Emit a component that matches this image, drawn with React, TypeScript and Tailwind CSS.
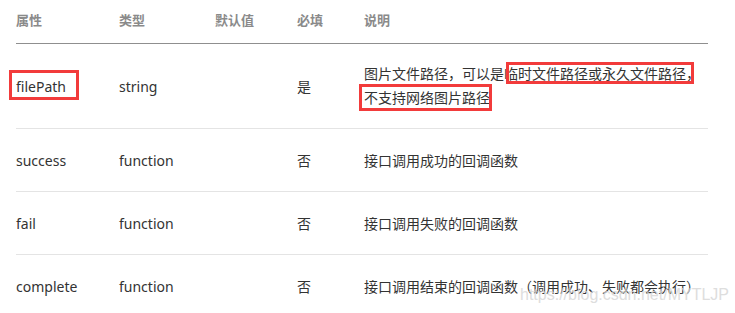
import React from "react";

type Row = {
  name: React.ReactNode;
  type: string;
  def: string;
  req: string;
  desc: React.ReactNode;
  h: string;
};

function Boxed({ children, className }: { children: React.ReactNode; className: string }) {
  return (
    <span className="relative">
      {children}
      <span className={`pointer-events-none absolute border-[3px] border-[#f23b3b] ${className}`} />
    </span>
  );
}

const rows: Row[] = [
  {
    name: <Boxed className="-left-[7px] -right-[13px] -top-[7px] -bottom-[4px]">filePath</Boxed>,
    type: "string",
    def: "",
    req: "是",
    desc: (
      <div className="leading-[24px]">
        <div className="whitespace-nowrap">
          图片文件路径，可以是
          <Boxed className="left-[2px] right-[6px] -top-[2px] -bottom-[1px]">临时文件路径或永久文件路径，</Boxed>
        </div>
        <div className="whitespace-nowrap">
          <Boxed className="-left-[5px] -right-[2px] -top-[4px] -bottom-[4px]">不支持网络图片路径</Boxed>
        </div>
      </div>
    ),
    h: "h-[85px]",
  },
  { name: "success", type: "function", def: "", req: "否", desc: "接口调用成功的回调函数", h: "h-[63px]" },
  { name: "fail", type: "function", def: "", req: "否", desc: "接口调用失败的回调函数", h: "h-[63px]" },
  {
    name: "complete",
    type: "function",
    def: "",
    req: "否",
    desc: "接口调用结束的回调函数（调用成功、失败都会执行）",
    h: "h-[63px]",
  },
];

const cols = "grid grid-cols-[103px_96px_82px_67px_1fr]";

export default function App() {
  return (
    <div
      className="relative h-[313px] w-[735px] overflow-hidden bg-white"
      style={{ fontFamily: '"Noto Sans", "Noto Sans CJK SC", sans-serif' }}
    >
      <div className="ml-4 w-[692px]">
        <div className={`${cols} h-[44px] items-center border-b border-[#8f8f8f] pb-[1px] text-[13px] font-bold text-[#8a8a8a]`}>
          <div>属性</div>
          <div>类型</div>
          <div>默认值</div>
          <div>必填</div>
          <div>说明</div>
        </div>
        {rows.map((r, i) => (
          <div
            key={i}
            className={`${cols} ${r.h} items-center text-[14px] text-[#333] ${
              i < rows.length - 1 ? "border-b border-[#e4e4e4]" : ""
            }`}
          >
            <div>{r.name}</div>
            <div>{r.type}</div>
            <div>{r.def}</div>
            <div>{r.req}</div>
            <div>{r.desc}</div>
          </div>
        ))}
      </div>
      <div
        className="pointer-events-none absolute left-[520px] top-[283px] whitespace-nowrap text-[16px] text-[#d6d6d6] opacity-80"
        style={{ fontFamily: '"Liberation Sans", Arial, sans-serif' }}
      >
        https://blog.csdn.net/MYTLJP
      </div>
    </div>
  );
}
